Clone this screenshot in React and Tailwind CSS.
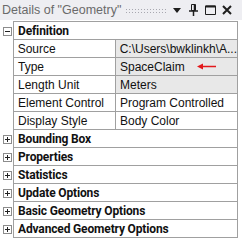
import React from "react";

function Box({ open }) {
  return (
    <div className="w-[9px] h-[9px] border border-[#8c8c8c] bg-white relative flex items-center justify-center">
      <div className="absolute w-[5px] h-px bg-[#222]" />
      {!open && <div className="absolute w-px h-[5px] bg-[#222]" />}
    </div>
  );
}

function Category({ label, open }) {
  return (
    <div className="flex h-[18px]">
      <div className="w-[13px] flex items-center justify-center pl-px">
        <Box open={open} />
      </div>
      <div className="flex-1 border-l border-b border-r border-[#a0a0a0] flex items-center pl-[4px] font-bold text-[12px] tracking-[-0.15px] text-[#111] font-['Roboto',sans-serif]">
        {label}
      </div>
    </div>
  );
}

function Prop({ label, value, gray, children }) {
  return (
    <div className="flex h-[18px]">
      <div className="w-[13px]" />
      <div className="flex-1 flex border-l border-b border-r border-[#a0a0a0]">
        <div className="w-[102px] border-r border-[#a0a0a0] flex items-center pl-[4px] text-[#111]">{label}</div>
        <div className={"flex-1 flex items-center pl-[4px] text-[#111] whitespace-nowrap overflow-hidden " + (gray ? "bg-[#e8e8e8]" : "bg-white")}>
          {value}
          {children}
        </div>
      </div>
    </div>
  );
}

export default function App() {
  const closed = [
    "Bounding Box",
    "Properties",
    "Statistics",
    "Update Options",
    "Basic Geometry Options",
    "Advanced Geometry Options",
  ];

  return (
    <div className="w-[242px] h-[241px] bg-white overflow-hidden text-[12px] leading-none font-['Segoe_UI','Liberation_Sans',sans-serif]">
      {/* title bar */}
      <div className="h-[20px] bg-[#eeeef2] flex items-center pl-[2px] pr-[10px]">
        <span className="text-[#6a6a6a] text-[12.5px] whitespace-nowrap">Details of "Geometry"</span>
        <div className="flex-1 h-[5px] mx-[4px] bg-[radial-gradient(circle,#a8a8b0_0.7px,transparent_0.8px)] bg-[length:3px_3px]" />
        <svg width="8" height="5" viewBox="0 0 8 5" className="ml-[2px]">
          <path d="M0 0H8L4 5Z" fill="#1e1e1e" />
        </svg>
        <svg width="9" height="12" viewBox="0 0 9 12" className="ml-[8px]">
          <path d="M2.5 0.5H6.5V6.5H2.5Z" fill="none" stroke="#1e1e1e" />
          <path d="M5.5 0.5V6.5" stroke="#1e1e1e" strokeWidth="1.5" />
          <path d="M0 7H9" stroke="#1e1e1e" strokeWidth="1.5" />
          <path d="M4.5 7V12" stroke="#1e1e1e" strokeWidth="1.5" />
        </svg>
        <svg width="11" height="10" viewBox="0 0 11 10" className="ml-[7px]">
          <path d="M0.5 1H10.5V9.5H0.5Z" fill="none" stroke="#1e1e1e" />
          <path d="M0.5 1.5H10.5" stroke="#1e1e1e" strokeWidth="2" />
        </svg>
        <svg width="10" height="10" viewBox="0 0 10 10" className="ml-[6px]">
          <path d="M1 1L9 9M9 1L1 9" stroke="#1e1e1e" strokeWidth="2" />
        </svg>
      </div>

      {/* property grid */}
      <div className="mt-[1px] w-[238px]">
        <div className="flex h-px">
          <div className="w-[13px]" />
          <div className="flex-1 bg-[#a0a0a0]" />
        </div>
        <Category label="Definition" open />
        <Prop label="Source" value="C:\Users\bwklinkh\A..." gray />
        <Prop label="Type" value="SpaceClaim" gray>
          <svg width="20" height="7" viewBox="0 0 20 7" className="ml-[12px]">
            <path d="M3 3.5H19" stroke="#e3191c" strokeWidth="1.5" />
            <path d="M0 3.5L6 0.5V6.5Z" fill="#e3191c" />
          </svg>
        </Prop>
        <Prop label="Length Unit" value="Meters" gray />
        <Prop label="Element Control" value="Program Controlled" />
        <Prop label="Display Style" value="Body Color" />
        {closed.map((c) => (
          <Category key={c} label={c} />
        ))}
      </div>
    </div>
  );
}
